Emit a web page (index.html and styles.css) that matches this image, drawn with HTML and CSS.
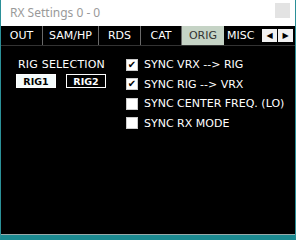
FILE: index.html
```html
<!DOCTYPE html>
<html lang="en">
<head>
    <meta charset="UTF-8">
    <title>RX Settings 0 - 0</title>
    <link rel="stylesheet" href="styles.css">
</head>
<body>
    <div class="window">
        <div class="title-bar">
            <span class="title">RX Settings 0 - 0</span>
            <span class="close-btn"></span>
        </div>
        <div class="tab-strip">
            <div class="tab" style="width: 42px">OUT</div>
            <div class="tab" style="width: 56px">SAM/HP</div>
            <div class="tab" style="width: 42px">RDS</div>
            <div class="tab" style="width: 41px">CAT</div>
            <div class="tab active" style="width: 42px">ORIG</div>
            <div class="tab last">MISC</div>
            <div class="scroll-btns">
                <span class="scroll-btn">&#9664;</span>
                <span class="scroll-btn">&#9654;</span>
            </div>
        </div>
        <div class="content">
            <div class="rig-section">
                <div class="section-label">RIG SELECTION</div>
                <div class="rig-buttons">
                    <button class="rig-btn selected">RIG1</button>
                    <button class="rig-btn">RIG2</button>
                </div>
            </div>
            <div class="sync-list">
                <label class="sync-row"><span class="box checked">&#10004;</span>SYNC VRX --&gt; RIG</label>
                <label class="sync-row"><span class="box checked">&#10004;</span>SYNC RIG --&gt; VRX</label>
                <label class="sync-row"><span class="box"></span>SYNC CENTER FREQ. (LO)</label>
                <label class="sync-row"><span class="box"></span>SYNC RX MODE</label>
            </div>
        </div>
    </div>
</body>
</html>
```

FILE: styles.css
```css
html, body {
    margin: 0;
    padding: 0;
    background-color: #1c8a91;
}

.window {
    width: 296px;
    height: 240px;
    box-sizing: border-box;
    display: flex;
    flex-direction: column;
    border-left: 1px solid #2b9098;
    border-right: 1px solid #2b9098;
    border-bottom: 5px solid #1c8a91;
    background-color: #000;
    font-family: "DejaVu Sans", sans-serif;
}

.title-bar {
    height: 24px;
    flex-shrink: 0;
    background-color: #fff;
    display: flex;
    align-items: center;
    justify-content: space-between;
    padding: 0 5px 2px 9px;
}

.title {
    font-family: "Noto Sans", sans-serif;
    font-size: 12px;
    color: #9a9a9a;
}

.close-btn {
    width: 15px;
    height: 15px;
    background-color: #e3e3e3;
    align-self: flex-start;
    margin-top: 3px;
}

.tab-strip {
    height: 19px;
    flex-shrink: 0;
    display: flex;
    align-items: stretch;
    background-color: #000;
    border-bottom: 1px solid #333;
    position: relative;
}

.tab {
    display: flex;
    align-items: center;
    justify-content: center;
    font-size: 11px;
    color: #fff;
    border-right: 1px solid #6a6a6a;
    box-sizing: border-box;
}

.tab.active {
    background-color: #c5d3c5;
    color: #333;
    border-right: none;
}

.tab.last {
    border-right: none;
    justify-content: flex-start;
    padding-left: 3px;
    flex: 1;
}

.scroll-btns {
    position: absolute;
    right: 2px;
    top: 3px;
    display: flex;
    gap: 1px;
}

.scroll-btn {
    width: 15px;
    height: 13px;
    background-color: #f2f2f2;
    color: #000;
    font-size: 8px;
    display: flex;
    align-items: center;
    justify-content: center;
}

.content {
    flex: 1;
    display: flex;
    padding: 12px 0 0 15px;
    border-bottom: 1px solid #9aa;
}

.rig-section {
    width: 110px;
}

.section-label {
    font-size: 11px;
    color: #fff;
    padding-left: 2px;
    letter-spacing: 0.2px;
}

.rig-buttons {
    display: flex;
    gap: 10px;
    margin-top: 3px;
}

.rig-btn {
    width: 40px;
    height: 14px;
    padding: 0;
    font-family: "DejaVu Sans", sans-serif;
    font-size: 9.5px;
    font-weight: bold;
    box-sizing: border-box;
    border: 1px solid #fff;
    background-color: #000;
    color: #fff;
}

.rig-btn.selected {
    background-color: #f4fbfb;
    color: #000;
}

.sync-list {
    display: flex;
    flex-direction: column;
    gap: 6.5px;
    margin-top: 0;
}

.sync-row {
    display: flex;
    align-items: center;
    gap: 6px;
    font-size: 11px;
    color: #fff;
    height: 13px;
}

.box {
    width: 12px;
    height: 12px;
    box-sizing: border-box;
    border: 1px solid #ccc;
    background-color: #fff;
    color: #000;
    font-size: 10px;
    font-weight: bold;
    line-height: 10px;
    text-align: center;
    display: inline-block;
}
```
